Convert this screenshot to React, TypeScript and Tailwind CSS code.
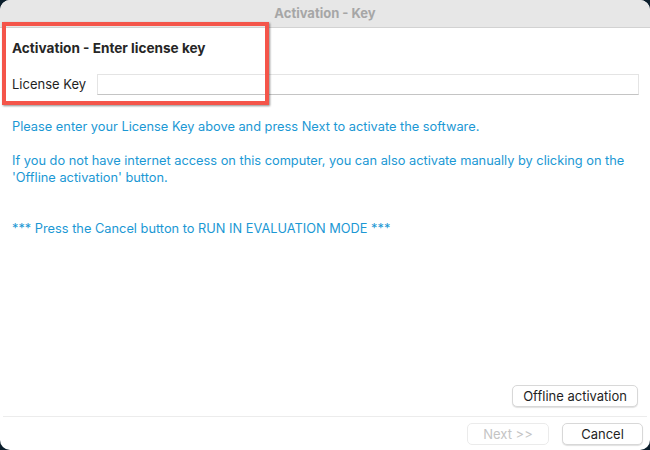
import React from "react";

export default function App() {
  const font = { fontFamily: "Inter, 'Liberation Sans', sans-serif" };
  return (
    <div className="w-[650px] h-[450px] bg-[#0b1e2c] overflow-hidden" style={font}>
      <div className="w-full h-full bg-white rounded-[10px] overflow-hidden flex flex-col relative">
        <div className="h-[28px] bg-[#e7e7e7] border-b border-[#d2d2d2] flex items-center justify-center shrink-0">
          <span className="text-[13px] font-bold text-[#a6a6a6]">Activation - Key</span>
        </div>
        <div className="flex-1 flex flex-col px-3">
          <div className="pt-[10px] text-[13.6px] font-bold text-[#262626]">Activation - Enter license key</div>
          <div className="flex items-center mt-[16px]">
            <span className="text-[13px] text-[#1f1f1f] w-[85px]">License Key</span>
            <div className="flex-1 h-[21px] border border-[#e4e4e4] border-b-[#c4c4c4] mr-[-1px]" />
          </div>
          <div className="mt-[23px] text-[12.8px] text-[#1b98d4] leading-[17px]">
            <p>Please enter your License Key above and press Next to activate the software.</p>
            <p className="mt-[17px]">If you do not have internet access on this computer, you can also activate manually by clicking on the</p>
            <p>'Offline activation' button.</p>
            <p className="mt-[34px]">*** Press the Cancel button to RUN IN EVALUATION MODE ***</p>
          </div>
          <div className="flex-1" />
          <div className="flex justify-end mb-[9px]">
            <button className="h-[22px] px-[10px] rounded-[5px] bg-white border border-[#d8d8d8] shadow-[0_1px_1px_rgba(0,0,0,0.12)] text-[13px] text-[#1f1f1f] leading-none">Offline activation</button>
          </div>
        </div>
        <div className="h-px bg-[#ececec] mx-[3px]" />
        <div className="flex justify-end items-center gap-[13px] pr-[7px] pt-[6px] pb-[5px]">
          <button className="h-[22px] w-[82px] rounded-[5px] bg-white border border-[#ebebeb] text-[13px] text-[#c4c4c4] leading-none">Next &gt;&gt;</button>
          <button className="h-[22px] w-[81px] rounded-[5px] bg-white border border-[#d8d8d8] shadow-[0_1px_1px_rgba(0,0,0,0.12)] text-[13px] text-[#1f1f1f] leading-none">Cancel</button>
        </div>
        <div className="absolute left-[2px] top-[22px] w-[267px] h-[83px] border-[4px] border-[#f4554a] shadow-[1px_1px_2px_rgba(0,0,0,0.45)] pointer-events-none" />
      </div>
    </div>
  );
}
